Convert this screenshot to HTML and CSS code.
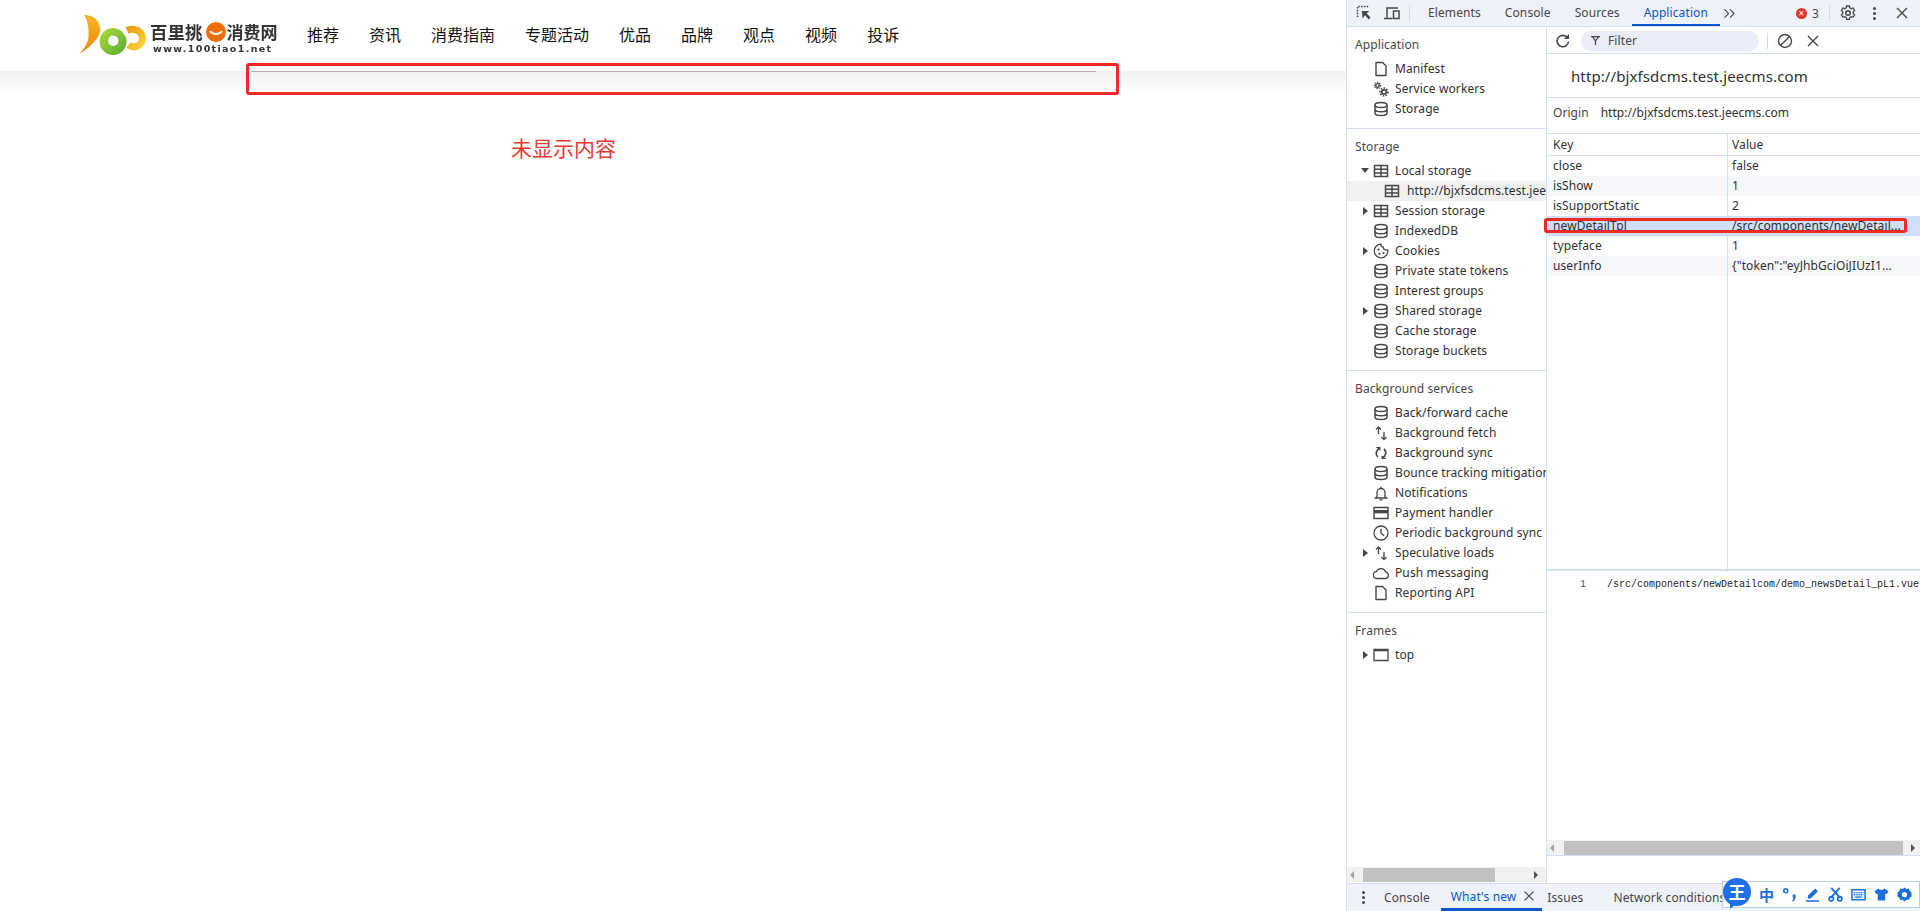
FILE: index.html
```html
<!DOCTYPE html>
<html lang="zh">
<head>
<meta charset="utf-8">
<title>百里挑一消费网</title>
<link rel="stylesheet" href="styles.css">
</head>
<body>
<svg class="defs" width="0" height="0">
  <symbol id="doc" viewBox="0 0 16 16"><path d="M3 1.500h6.500l3.500 3.500v9.500H3z" fill="none" stroke="currentColor" stroke-width="1.400" stroke-linejoin="round"/></symbol>
  <symbol id="gears" viewBox="0 0 16 16"><circle cx="4.500" cy="4.500" r="1.800" fill="none" stroke="currentColor" stroke-width="1.300"/><circle cx="4.500" cy="4.500" r="3.100" fill="none" stroke="currentColor" stroke-width="1.100" stroke-dasharray="1.300 1"/><circle cx="11" cy="11" r="2.200" fill="none" stroke="currentColor" stroke-width="1.700"/><circle cx="11" cy="11" r="3.900" fill="none" stroke="currentColor" stroke-width="1.500" stroke-dasharray="1.600 1.300"/></symbol>
  <symbol id="db" viewBox="0 0 16 16"><ellipse cx="8" cy="4" rx="6" ry="2.500" fill="none" stroke="currentColor" stroke-width="1.500"/><path d="M2 4v8c0 1.400 2.700 2.500 6 2.500s6-1.100 6-2.500V4M2 8.200c0 1.400 2.700 2.500 6 2.500s6-1.100 6-2.500" fill="none" stroke="currentColor" stroke-width="1.500"/></symbol>
  <symbol id="table" viewBox="0 0 16 16"><path d="M1.500 2.500h13v11h-13zM1.500 6.200h13M1.500 9.900h13M8 2.500v11" fill="none" stroke="currentColor" stroke-width="1.500"/></symbol>
  <symbol id="cookie" viewBox="0 0 16 16"><path d="M8 1.200a2.500 2.500 0 0 0 2.300 3 2.500 2.500 0 0 0 3 2.700 2 2 0 0 0 1.500.3A6.800 6.800 0 1 1 8 1.200z" fill="none" stroke="currentColor" stroke-width="1.300"/><circle cx="5.500" cy="6.500" r="1.100" fill="currentColor"/><circle cx="6.500" cy="10.800" r="1.100" fill="currentColor"/><circle cx="10.500" cy="10" r="1.100" fill="currentColor"/></symbol>
  <symbol id="updown" viewBox="0 0 16 16"><path d="M5.500 9V2M3 4.500L5.500 2 8 4.500M11 7v7.500M8.500 12L11 14.500 13.500 12" fill="none" stroke="currentColor" stroke-width="1.300"/></symbol>
  <symbol id="sync" viewBox="0 0 16 16"><path d="M6.500 3.500A5 5 0 0 0 5 12M9.500 12.500A5 5 0 0 0 11 4" fill="none" stroke="currentColor" stroke-width="1.700"/><path d="M2.500 2h5v3.500zM13.500 14h-5v-3.500z" fill="currentColor"/></symbol>
  <symbol id="bell" viewBox="0 0 16 16"><path d="M4 11.500V7.500a4 4 0 0 1 8 0v4l1.500 1.500h-11zM8 1.500v2M6.500 14.800h3" fill="none" stroke="currentColor" stroke-width="1.300"/></symbol>
  <symbol id="card" viewBox="0 0 16 16"><path d="M1 2.500h14v11H1z" fill="none" stroke="currentColor" stroke-width="1.400"/><path d="M1 5h14v3.300H1z" fill="currentColor"/></symbol>
  <symbol id="clock" viewBox="0 0 16 16"><circle cx="8" cy="8" r="7" fill="none" stroke="currentColor" stroke-width="1.300"/><path d="M8 3.800v4.500l3.200 2.500" fill="none" stroke="currentColor" stroke-width="1.300"/></symbol>
  <symbol id="cloud" viewBox="0 0 16 16"><path d="M3.800 13.500a3.400 3.400 0 0 1-.4-6.800A5 5 0 0 1 12.700 7a3.300 3.300 0 0 1 0 6.500z" fill="none" stroke="currentColor" stroke-width="1.300"/></symbol>
  <symbol id="frame" viewBox="0 0 16 16"><path d="M1 2.500h14v11H1z" fill="none" stroke="currentColor" stroke-width="1.300"/><path d="M1 3.400h14" stroke="currentColor" stroke-width="1.800"/></symbol>
  <symbol id="x" viewBox="0 0 16 16"><path d="M3 3l10 10M13 3L3 13" fill="none" stroke="currentColor" stroke-width="1.400"/></symbol>
</svg>

<div class="page">
  <header class="site-head">
    <svg class="logo-mark" viewBox="0 0 72 42" aria-hidden="true">
      <defs>
        <linearGradient id="og" x1="0" y1="0" x2="0" y2="1"><stop offset="0" stop-color="#f8b522"/><stop offset=".55" stop-color="#f39a12"/><stop offset="1" stop-color="#ec8a12"/></linearGradient>
        <linearGradient id="gg" x1="0" y1="0" x2="1" y2="1"><stop offset="0" stop-color="#b6da3a"/><stop offset="1" stop-color="#4eae35"/></linearGradient>
        <linearGradient id="yg" x1="0" y1="0" x2="1" y2="1"><stop offset="0" stop-color="#f29a18"/><stop offset="1" stop-color="#f7d43a"/></linearGradient>
      </defs>
      <path d="M6 1c9 0 14 4 16 12 1 6-2 11-6 15C12 33 6 37 1 40c5-5 9-11 9.500-17C11 15 10 7 6 1z" fill="url(#og)"/>
      <path fill-rule="evenodd" d="M35 14a13.500 13.500 0 1 0 .1 27 13.500 13.500 0 0 0-.1-27zm.3 7.500a5.200 5.200 0 1 1-.1 10.400 5.200 5.200 0 0 1 .1-10.400z" fill="url(#gg)"/>
      <path d="M38 14c4 0 8 3 9 7" fill="none" stroke="#fff" stroke-width="1.400"/>
      <path d="M49 16.500c6-3 15 0 15.500 7.500.3 7-8 11.500-14 7" fill="none" stroke="url(#yg)" stroke-width="7"/>
    </svg>
    <div class="logo-type">
      <div class="logo-top">
        <span class="logo-a">百里挑</span>
        <svg class="logo-smile" viewBox="0 0 20 20" aria-hidden="true"><circle cx="10" cy="10" r="10" fill="#ef6d0c"/><path d="M4 9c3 4 9 4 12 0" fill="none" stroke="#fff" stroke-width="2"/></svg>
        <span class="logo-b">消费网</span>
      </div>
      <div class="logo-url">www.100tiao1.net</div>
    </div>
    <nav class="site-nav">
      <a>推荐</a><a>资讯</a><a>消费指南</a><a>专题活动</a><a>优品</a><a>品牌</a><a>观点</a><a>视频</a><a>投诉</a>
    </nav>
  </header>
  <div class="site-shade"><div class="thin-rule"></div></div>
  <div class="mark-box"></div>
  <div class="mark-note">未显示内容</div>
</div>

<aside class="dt">
  <div class="dt-tabs">
    <svg class="tool t-inspect" viewBox="0 0 16 16"><path d="M1.500 12V1.500H12.500" fill="none" stroke="currentColor" stroke-width="1.400" stroke-dasharray="1.600 1.200"/><path d="M6 6h7.500l-2.800 2.200L14.500 12.500 12.800 14.500 9 10.300 6.500 13.500z" fill="currentColor"/></svg>
    <svg class="tool t-device" viewBox="0 0 16 16"><path d="M3 12.500V3h11M0 13.500h8.500" fill="none" stroke="currentColor" stroke-width="1.500"/><path d="M9.500 6h5.500v7.500H9.500z" fill="none" stroke="currentColor" stroke-width="1.500"/></svg>
    <span class="tab-sep sep-a"></span>
    <span class="tab tab-first">Elements</span><span class="tab">Console</span><span class="tab">Sources</span><span class="tab tab-on">Application</span>
    <svg class="more" viewBox="0 0 14 12"><path d="M1.500 1.500L6 6l-4.500 4.500M7.500 1.500L12 6l-4.500 4.500" fill="none" stroke="currentColor" stroke-width="1.200"/></svg>
    <span class="err"><span class="err-dot">&times;</span>3</span>
    <span class="tab-sep sep-r"></span>
    <svg class="tool t-gear" viewBox="0 0 16 16"><circle cx="8" cy="8" r="2.300" fill="none" stroke="currentColor" stroke-width="1.500"/><path d="M6.600 1h2.800l.4 1.900 1.500.8 1.800-.7 1.500 2.500-1.400 1.300v1.700l1.400 1.300-1.500 2.500-1.800-.7-1.500.8-.4 1.900H6.600l-.4-1.900-1.500-.8-1.800.7-1.500-2.500 1.400-1.300V6.800L1.400 5.500 2.900 3l1.800.7 1.500-.8z" fill="none" stroke="currentColor" stroke-width="1.300"/></svg>
    <span class="dots"><i></i><i></i><i></i></span>
    <svg class="tool t-close" viewBox="0 0 16 16"><use href="#x"/></svg>
  </div>

  <div class="dt-body">
    <div class="side">
      <div class="side-scroll">
        <section class="sec sec-first">
          <h3>Application</h3>
          <div class="row"><i class="arw"></i><svg class="ic"><use href="#doc"/></svg><span>Manifest</span></div>
          <div class="row"><i class="arw"></i><svg class="ic"><use href="#gears"/></svg><span>Service workers</span></div>
          <div class="row"><i class="arw"></i><svg class="ic"><use href="#db"/></svg><span>Storage</span></div>
        </section>
        <section class="sec">
          <h3>Storage</h3>
          <div class="row"><i class="arw arw-down"></i><svg class="ic"><use href="#table"/></svg><span>Local storage</span></div>
          <div class="row row-sub"><svg class="ic"><use href="#table"/></svg><span>http://bjxfsdcms.test.jeecms.com</span></div>
          <div class="row"><i class="arw arw-right"></i><svg class="ic"><use href="#table"/></svg><span>Session storage</span></div>
          <div class="row"><i class="arw"></i><svg class="ic"><use href="#db"/></svg><span>IndexedDB</span></div>
          <div class="row"><i class="arw arw-right"></i><svg class="ic"><use href="#cookie"/></svg><span>Cookies</span></div>
          <div class="row"><i class="arw"></i><svg class="ic"><use href="#db"/></svg><span>Private state tokens</span></div>
          <div class="row"><i class="arw"></i><svg class="ic"><use href="#db"/></svg><span>Interest groups</span></div>
          <div class="row"><i class="arw arw-right"></i><svg class="ic"><use href="#db"/></svg><span>Shared storage</span></div>
          <div class="row"><i class="arw"></i><svg class="ic"><use href="#db"/></svg><span>Cache storage</span></div>
          <div class="row"><i class="arw"></i><svg class="ic"><use href="#db"/></svg><span>Storage buckets</span></div>
        </section>
        <section class="sec">
          <h3>Background services</h3>
          <div class="row"><i class="arw"></i><svg class="ic"><use href="#db"/></svg><span>Back/forward cache</span></div>
          <div class="row"><i class="arw"></i><svg class="ic"><use href="#updown"/></svg><span>Background fetch</span></div>
          <div class="row"><i class="arw"></i><svg class="ic"><use href="#sync"/></svg><span>Background sync</span></div>
          <div class="row"><i class="arw"></i><svg class="ic"><use href="#db"/></svg><span>Bounce tracking mitigations</span></div>
          <div class="row"><i class="arw"></i><svg class="ic"><use href="#bell"/></svg><span>Notifications</span></div>
          <div class="row"><i class="arw"></i><svg class="ic"><use href="#card"/></svg><span>Payment handler</span></div>
          <div class="row"><i class="arw"></i><svg class="ic"><use href="#clock"/></svg><span>Periodic background sync</span></div>
          <div class="row"><i class="arw arw-right"></i><svg class="ic"><use href="#updown"/></svg><span>Speculative loads</span></div>
          <div class="row"><i class="arw"></i><svg class="ic"><use href="#cloud"/></svg><span>Push messaging</span></div>
          <div class="row"><i class="arw"></i><svg class="ic"><use href="#doc"/></svg><span>Reporting API</span></div>
        </section>
        <section class="sec sec-frames">
          <h3>Frames</h3>
          <div class="row"><i class="arw arw-right"></i><svg class="ic"><use href="#frame"/></svg><span>top</span></div>
        </section>
      </div>
      <div class="hbar hbar-side"><i class="bar-l"></i><b class="thumb"></b><i class="bar-r"></i></div>
    </div>

    <div class="main">
      <div class="main-tools">
        <svg class="tool t-reload" viewBox="0 0 16 16"><path d="M13.500 8.500a5.700 5.700 0 1 1-1.800-4.600" fill="none" stroke="currentColor" stroke-width="1.600"/><path d="M14 1v5h-5z" fill="currentColor"/></svg>
        <div class="filter"><svg class="f-ic" viewBox="0 0 16 16"><path d="M1.500 2.500h13M3.500 2.500L8 8.500v6M12.500 2.500L8 8.500" fill="none" stroke="currentColor" stroke-width="1.800"/></svg><span>Filter</span></div>
        <span class="tab-sep sep-f"></span>
        <svg class="tool t-block" viewBox="0 0 16 16"><circle cx="8" cy="8" r="6.500" fill="none" stroke="currentColor" stroke-width="1.400"/><path d="M3.500 12.500l9-9" stroke="currentColor" stroke-width="1.400"/></svg>
        <svg class="tool t-clear" viewBox="0 0 16 16"><use href="#x"/></svg>
      </div>
      <div class="origin-title">http://bjxfsdcms.test.jeecms.com</div>
      <div class="origin-row"><span class="o-k">Origin</span><span>http://bjxfsdcms.test.jeecms.com</span></div>
      <div class="kv">
        <div class="kv-row kv-head"><span>Key</span><span>Value</span></div>
        <div class="kv-row"><span>close</span><span>false</span></div>
        <div class="kv-row kv-alt"><span>isShow</span><span>1</span></div>
        <div class="kv-row"><span>isSupportStatic</span><span>2</span></div>
        <div class="kv-row kv-sel"><span>newDetailTpl</span><span>/src/components/newDetail...</span></div>
        <div class="kv-row"><span>typeface</span><span>1</span></div>
        <div class="kv-row kv-alt"><span>userInfo</span><span>{"token":"eyJhbGciOiJIUzI1...</span></div>
        <div class="kv-row kv-fill"><span></span><span></span></div>
      </div>
      <div class="preview"><span class="ln">1</span><span class="code">/src/components/newDetailcom/demo_newsDetail_pL1.vue</span></div>
      <div class="hbar hbar-main"><i class="bar-l"></i><b class="thumb"></b><i class="bar-r"></i></div>
      <div class="main-end"></div>
    </div>
  </div>

  <div class="drawer">
    <span class="dots dots-d"><i></i><i></i><i></i></span>
    <span class="d-tab d-first">Console</span>
    <span class="d-tab d-on">What's new<svg class="d-x"><use href="#x"/></svg></span>
    <span class="d-tab d-issues">Issues</span>
    <span class="d-tab d-net">Network conditions</span>
  </div>

  <div class="mark-row"></div>

  <div class="ime">
    <span class="ime-logo">王</span>
    <span class="ime-ch">中</span>
    <svg class="ime-ic" viewBox="0 0 16 16"><circle cx="4" cy="4" r="2.200" fill="none" stroke="currentColor" stroke-width="1.500"/><path d="M11.500 8h3v3c0 2-1 3.500-3 4.500l-.8-1.200c1-.6 1.600-1.300 1.700-2.300h-.9z" fill="currentColor"/></svg>
    <svg class="ime-ic" viewBox="0 0 16 16"><path d="M10.800 1.500l3 3-7.800 7.800H3v-3zM1 14h14v1.700H1z" fill="currentColor"/></svg>
    <svg class="ime-ic" viewBox="0 0 16 16"><path d="M3.500 1l9.500 10.500M12.500 1L3 11.500" fill="none" stroke="currentColor" stroke-width="2"/><circle cx="3.500" cy="12.500" r="2.300" fill="none" stroke="currentColor" stroke-width="1.800"/><circle cx="12.500" cy="12.500" r="2.300" fill="none" stroke="currentColor" stroke-width="1.800"/></svg>
    <svg class="ime-ic" viewBox="0 0 16 16"><path d="M1 3h14v10.500H1z" fill="none" stroke="currentColor" stroke-width="1.600"/><path d="M3 6h10M3 8.300h10" stroke="currentColor" stroke-width="1.500" stroke-dasharray="1.300 .6"/><path d="M4.500 10.800h7" stroke="currentColor" stroke-width="1.500"/></svg>
    <svg class="ime-ic" viewBox="0 0 16 16"><path d="M5 1.500L0.500 4.500l2 3.300L4 7v7.500h8V7l1.500.8 2-3.300L11 1.500c-.5 1.800-5.500 1.800-6 0z" fill="currentColor"/></svg>
    <svg class="ime-ic" viewBox="0 0 16 16"><path fill-rule="evenodd" d="M8 .5l2 1.500 2.500-.3 1 2.300L15.500 6v4l-2 1.500-1 2.300-2.500-.3L8 15.500l-2-2-2.500.3-1-2.300-2-1.500V6l2-2 1-2.300L6 2zM8 5.200a2.800 2.800 0 1 0 0 5.600 2.800 2.800 0 0 0 0-5.600z" fill="currentColor"/></svg>
  </div>
</aside>
</body>
</html>
```
FILE: styles.css
```css
* { box-sizing: border-box; }
html, body { margin: 0; height: 100%; }
body {
  width: 1920px;
  height: 911px;
  display: flex;
  overflow: hidden;
  background: #fff;
  font-family: "Noto Sans", "Noto Sans CJK SC", sans-serif;
  position: relative;
}
.defs { position: absolute; }

/* left page */
.page { width: 1346px; flex: none; position: relative; }
.site-head {
  height: 71px;
  display: flex;
  align-items: flex-start;
  padding: 14px 0 0 78px;
  background: #fff;
}
.logo-mark { width: 72px; height: 42px; flex: none; filter: blur(.3px); }
.logo-type { width: 128px; padding-top: 7px; flex: none; filter: blur(.35px); color: #333; }
.logo-top { display: flex; align-items: center; height: 22px; }
.logo-a { font: 700 17.500px/22px "Noto Sans CJK SC", sans-serif; white-space: nowrap; }
.logo-b { font: 700 17px/22px "Noto Sans CJK SC", sans-serif; white-space: nowrap; }
.logo-smile { width: 20px; height: 20px; margin: 0 1px 0 3px; flex: none; }
.logo-url { font: 700 9.500px/11px "DejaVu Sans", sans-serif; letter-spacing: 1.350px; margin: 0 0 0 3px; white-space: nowrap; }
.site-nav {
  display: flex;
  gap: 30px;
  margin-left: 29px;
  height: 40px;
  align-items: center;
  font: 400 16px/24px "Noto Sans CJK SC", sans-serif;
  color: #111;
  white-space: nowrap;
}
.site-shade {
  height: 24px;
  background: linear-gradient(#f0f0f0, #fff);
  padding-left: 251px;
}
.thin-rule { width: 845px; height: 1px; background: #b7a9aa; }
.mark-box {
  position: absolute;
  left: 246px;
  top: 63px;
  width: 873px;
  height: 32px;
  border: 3px solid #ee2a24;
  border-radius: 3px;
}
.mark-note {
  position: absolute;
  left: 511px;
  top: 132px;
  font: 400 21px/30px "Noto Sans CJK SC", sans-serif;
  color: #e23a33;
  white-space: nowrap;
}

/* devtools */
.dt {
  width: 574px;
  flex: none;
  display: flex;
  flex-direction: column;
  height: 911px;
  border-left: 1px solid #d3e0f1;
  font-size: 12px;
  letter-spacing: .1px;
  color: #303030;
  position: relative;
}
.dt-tabs {
  height: 27px;
  flex: none;
  display: flex;
  align-items: center;
  background: #eef2f9;
  border-bottom: 1px solid #d3e0f1;
  color: #474747;
  padding-left: 9px;
}
.tool { width: 16px; height: 16px; flex: none; color: #474747; }
.t-device { margin-left: 12px; }
.tab-sep { width: 1px; height: 16px; background: #d3dbe8; flex: none; }
.sep-a { margin-left: 9px; }
.tab { height: 26px; line-height: 25px; padding: 0 12px; white-space: nowrap; }
.tab-first { margin-left: 6px; }
.tab-on { color: #0b57d0; border-bottom: 2px solid #0b57d0; }
.more { width: 13px; height: 11px; margin-left: 3px; color: #474747; flex: none; }
.err { margin-left: 60px; display: flex; align-items: center; gap: 5px; color: #474747; }
.err-dot {
  width: 11px; height: 11px; border-radius: 50%;
  background: #dc362e; color: #fff; font-size: 10px; line-height: 10px; text-align: center;
}
.sep-r { margin-left: 10px; }
.t-gear { margin-left: 10px; }
.dots { display: flex; flex-direction: column; gap: 2px; margin-left: 17px; width: 3px; flex: none; }
.dots i { width: 3px; height: 3px; border-radius: 50%; background: #474747; display: block; }
.t-close { margin-left: 18px; }

.dt-body { flex: 1; display: flex; min-height: 0; }
.side {
  width: 200px;
  flex: none;
  border-right: 1px solid #d3e0f1;
  display: flex;
  flex-direction: column;
}
.side-scroll { flex: 1; overflow: hidden; min-height: 0; }
.sec { padding: 8px 0 9px; border-top: 1px solid #d3e0f1; }
.sec-first { border-top: 0; padding: 8px 0 9px; }
.sec h3 {
  margin: 0 0 4px;
  padding-left: 8px;
  font-size: 12px;
  font-weight: 400;
  line-height: 20px;
  color: #474747;
}
.row {
  height: 20px;
  display: flex;
  align-items: center;
  padding-left: 14px;
  white-space: nowrap;
  overflow: hidden;
}
.row span { line-height: 20px; }
.arw { width: 10px; height: 10px; flex: none; position: relative; display: block; }
.arw-right::before, .arw-down::before {
  content: "";
  position: absolute;
  width: 0; height: 0;
}
.arw-right::before { left: 2px; top: 1px; border-left: 5px solid #474747; border-top: 4px solid transparent; border-bottom: 4px solid transparent; }
.arw-down::before { left: 0; top: 2px; border-top: 5px solid #474747; border-left: 4px solid transparent; border-right: 4px solid transparent; }
.ic { width: 16px; height: 16px; flex: none; margin: 0 6px 0 2px; color: #474747; }
.row-sub { background: #f0f0f0; padding-left: 37px; }
.row-sub .ic { margin: 0 7px 0 0; }

.hbar {
  height: 15px;
  flex: none;
  display: flex;
  align-items: center;
  background: #f1f1f1;
  position: relative;
}
.hbar .thumb { height: 14px; background: #c1c1c1; display: block; flex: none; }
.hbar-side { margin-bottom: 1px; }
.hbar-side .thumb { width: 132px; margin-left: 4px; }
.hbar-main .thumb { width: 339px; margin-left: 5px; }
.bar-l, .bar-r { width: 12px; height: 14px; flex: none; display: block; position: relative; }
.bar-l::before { content: ""; position: absolute; left: 3px; top: 3px; border-right: 4px solid #a3a3a3; border-top: 4px solid transparent; border-bottom: 4px solid transparent; }
.bar-r::before { content: ""; position: absolute; left: 4px; top: 3px; border-left: 4px solid #505050; border-top: 4px solid transparent; border-bottom: 4px solid transparent; }
.hbar-side .bar-r { margin-left: 35px; }
.hbar-main .bar-r { margin-left: 4px; }

.main { flex: 1; min-width: 0; display: flex; flex-direction: column; }
.main-tools {
  height: 27px;
  flex: none;
  display: flex;
  align-items: center;
  border-bottom: 1px solid #d3e0f1;
  padding: 1px 0 0 8px;
  color: #474747;
}
.filter {
  margin-left: 10px;
  width: 178px;
  height: 20px;
  border-radius: 10px;
  background: #e9eef8;
  display: flex;
  align-items: center;
  padding-left: 9px;
  gap: 7px;
  color: #474747;
  flex: none;
}
.f-ic { width: 11px; height: 11px; }
.sep-f { margin-left: 8px; }
.t-block { margin-left: 9px; }
.t-clear { margin-left: 12px; }
.origin-title {
  height: 44px;
  flex: none;
  padding-left: 24px;
  font-size: 15px;
  line-height: 44px;
  border-bottom: 1px solid #d3e0f1;
  color: #303030;
}
.origin-row {
  height: 36px;
  flex: none;
  display: flex;
  align-items: center;
  padding: 0 0 6px 6px;
  gap: 12px;
  border-bottom: 1px solid #d3e0f1;
  letter-spacing: .05px;
}
.o-k { color: #474747; }
.kv {
  height: 437px;
  flex: none;
  display: flex;
  flex-direction: column;
  border-bottom: 2px solid #d3e0f1;
}
.kv-row { height: 20px; flex: none; display: flex; line-height: 20px; }
.kv-row span { white-space: nowrap; overflow: hidden; }
.kv-row span:first-child { width: 181px; padding-left: 6px; border-right: 1px solid #d3e0f1; flex: none; }
.kv-row span:last-child { flex: 1; padding-left: 4px; }
.kv-head { height: 22px; line-height: 21px; border-bottom: 1px solid #d3e0f1; }
.kv-alt { background: #f5f7fb; }
.kv-sel { background: #cfdff8; }
.kv-fill { flex: 1; }
.preview {
  flex: 1;
  min-height: 0;
  display: flex;
  padding: 7px 0 0 33px;
  font: 400 10px/14px "Liberation Mono", monospace;
  letter-spacing: 0;
  color: #222;
  white-space: nowrap;
}
.ln { width: 27px; flex: none; color: #555; }
.hbar-main { border-bottom: 1px solid #d3e0f1; height: 16px; }
.main-end { height: 27px; flex: none; }

.drawer {
  height: 28px;
  flex: none;
  display: flex;
  align-items: center;
  background: #eef2f9;
  border-top: 1px solid #d3e0f1;
  color: #474747;
}
.dots-d { margin-left: 15px; }
.d-tab { height: 27px; line-height: 25px; display: flex; align-items: center; white-space: nowrap; }
.d-first { margin-left: 19px; }
.d-on { color: #0b57d0; margin-left: 11px; padding: 0 6px 0 10px; border-bottom: 3px solid #0b57d0; }
.d-x { width: 14px; height: 14px; margin-left: 6px; color: #474747; }
.d-issues { margin-left: 5px; }
.d-net { margin-left: 30px; }

.mark-row {
  position: absolute;
  left: 197px;
  top: 218px;
  width: 363px;
  height: 15px;
  border: 3px solid #ee2a24;
  border-radius: 3px;
}

.ime {
  position: absolute;
  left: 375px;
  top: 881px;
  width: 198px;
  height: 27px;
  background: #fff;
  border: 1px solid #b9cfee;
  display: flex;
  align-items: center;
  color: #1a6fd9;
  padding-left: 36px;
  gap: 8px;
}
.ime-logo {
  position: absolute;
  left: 0;
  top: -4px;
  width: 28px;
  height: 28px;
  border-radius: 50%;
  background: #1f6fe6;
  color: #fff;
  font: 700 17px/28px "Noto Sans CJK SC", sans-serif;
  text-align: center;
}
.ime-logo::after {
  content: "";
  position: absolute;
  left: 7px;
  bottom: -3px;
  width: 0;
  height: 0;
  border-left: 6px solid #1f6fe6;
  border-bottom: 5px solid transparent;
}
.ime-ch { font: 700 15px/20px "Noto Sans CJK SC", sans-serif; width: 15px; letter-spacing: 0; }
.ime-ic { width: 15px; height: 15px; flex: none; }
```
